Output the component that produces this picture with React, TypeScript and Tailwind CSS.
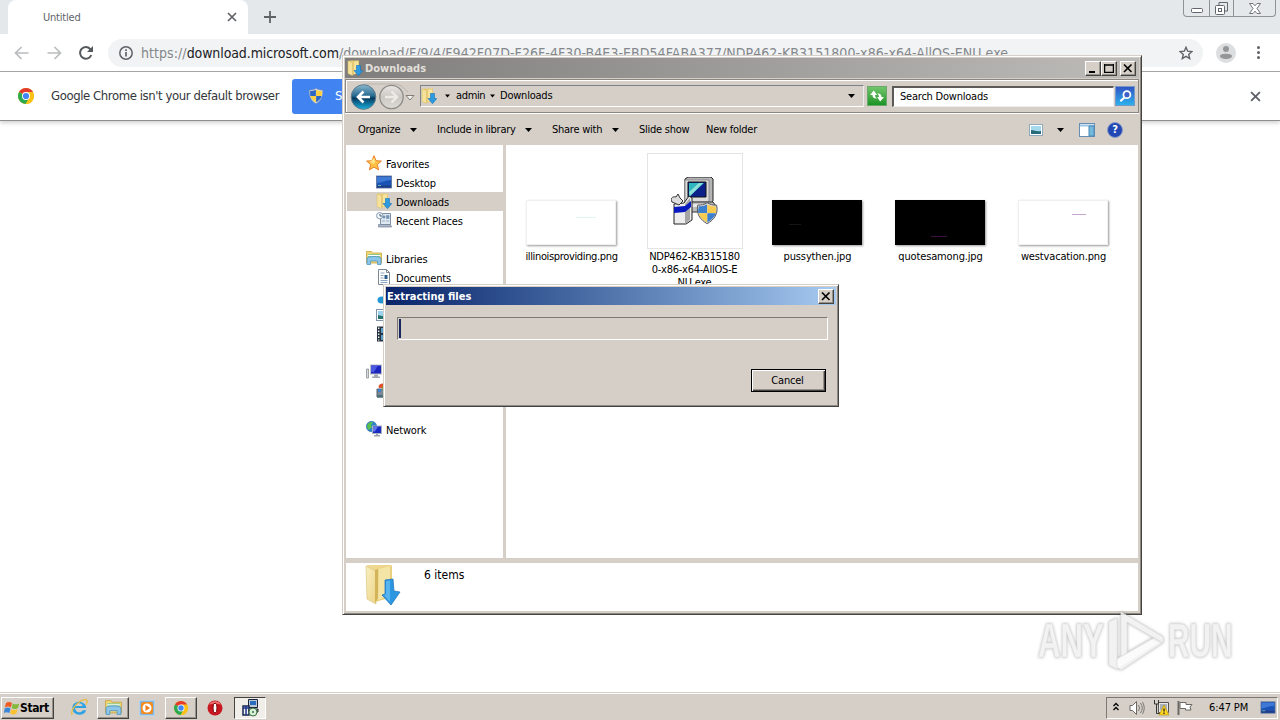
import React from "react";

type P = { className?: string };

const Svg = ({ className = "", box = "0 0 16 16", children }: { className?: string; box?: string; children: React.ReactNode }) => (
  <svg viewBox={box} className={`shrink-0 ${className}`} fill="none">{children}</svg>
);

const Caret = ({ className = "w-[7px]" }: P) => (
  <Svg className={`h-1 ${className}`} box="0 0 7 4"><path d="M0 0h7L3.5 4z" fill="#000" /></Svg>
);

const CloseX = ({ className = "" }: P) => (
  <Svg className={className} box="0 0 10 10"><path d="M1 1l8 8M9 1L1 9" stroke="#5f6368" strokeWidth="1.7" /></Svg>
);

const ChromeLogo = ({ className = "" }: P) => (
  <Svg className={className}>
    <circle cx="8" cy="8" r="8" fill="#fbc116" />
    <path d="M8 8L1.1 4A8 8 0 0 1 14.9 4z" fill="#e33b2e" />
    <path d="M8 8L1.1 4A8 8 0 0 0 7.6 16L11.3 9.8z" fill="#2da94f" />
    <path d="M8 4h6.9A8 8 0 0 1 7.6 16l3.9-6z" fill="#fbc116" />
    <circle cx="8" cy="8" r="4" fill="#fff" /><circle cx="8" cy="8" r="3.1" fill="#4285f4" />
  </Svg>
);

const Shield = ({ className = "" }: P) => (
  <Svg className={className}>
    <path d="M8 0.5c2 1.3 4.3 1.8 6.7 1.7.2 6-1.700 10.500-6.700 13.300C3 12.700 1.100 8.200 1.300 2.200 3.700 2.300 6 1.800 8 .5z" fill="#e8eaf0" stroke="#8a95a5" strokeWidth=".6" />
    <path d="M7.900 1.700V7.900H2.300c-.2-1.600-.2-3-.2-4.800C4.200 3.100 6.200 2.600 7.900 1.700z" fill="#2b66c4" />
    <path d="M8.100 1.700V7.900h5.600c.2-1.600.2-3 .2-4.800-2.100 0-4.100-.5-5.800-1.400z" fill="#fbd043" />
    <path d="M7.900 8.100v6.500C5 12.900 3 10.600 2.400 8.100z" fill="#fbd043" />
    <path d="M8.100 8.100v6.500c2.900-1.700 4.900-4 5.500-6.500z" fill="#2b66c4" />
  </Svg>
);

const DownloadsFolder = ({ className = "" }: P) => (
  <Svg className={className} box="0 0 36 42">
    <defs>
      <linearGradient id="fold" x2="1" y2="1"><stop stopColor="#f0dc98" /><stop offset="1" stopColor="#e5c868" /></linearGradient>
      <linearGradient id="flap" x2="1" y2="1"><stop stopColor="#f9efc0" /><stop offset="1" stopColor="#edd588" /></linearGradient>
    </defs>
    <path d="M2 1h24l1 1v26l-3 6-14 4z" fill="url(#fold)" />
    <path d="M14 5l11-3v30l-12 4z" fill="#f4e4a6" />
    <path d="M1 2l10 5v33L2 35z" fill="url(#flap)" stroke="#dcc682" strokeWidth=".7" />
    <path d="M10 6l3-1v29l-3 5z" fill="#d3b458" />
    <path d="M20 16l8-1 1 12 6 1-9 13-9-10 3-1z" fill="#2d96e0" stroke="#1670bd" strokeWidth=".7" />
    <path d="M21 17l4-.5V38l-6-7 2-1z" fill="#58b4ee" />
  </Svg>
);

const SmallFolder = ({ className = "" }: P) => (
  <Svg className={className}>
    <path d="M1 1l3-.5h8V13l-7 2z" fill="#e8cb74" />
    <path d="M1 1l4.500 1.500v13L1 13.500z" fill="#f6e29a" stroke="#d9bf6c" strokeWidth=".6" />
    <path d="M7 2l4-1v11l-4 2z" fill="#f5e4a0" />
    <path d="M9.500 5.500h4v5h2.300L11.500 15.700 7 10.500h2.500z" fill="#2d9be2" stroke="#1670b5" strokeWidth=".6" />
  </Svg>
);

const Monitor = ({ className = "" }: P) => (
  <Svg className={className}>
    <rect x=".5" y="2" width="15" height="12" fill="#1b52b5" stroke="#5a6f95" strokeWidth=".8" />
    <path d="M1 3h14v3C9 6 6 9 1 9z" fill="#3e79d6" /><path d="M1 11.500h14v2H1z" fill="#203d83" />
    <path d="M2 11.500h3" stroke="#6db8b0" />
  </Svg>
);

const Star = ({ className = "" }: P) => (
  <Svg className={className}>
    <path d="M8 .7l2.100 5 5.300.4-4.100 3.500 1.300 5.300L8 12.100l-4.600 2.800 1.300-5.300L.6 6.100l5.300-.4z" fill="#ffc240" stroke="#e8802b" strokeWidth="1" />
    <path d="M8 3l1.300 3.500L8 9 4 7z" fill="#ffe48c" />
  </Svg>
);

const Recent = ({ className = "" }: P) => (
  <Svg className={className}>
    <path d="M4.500 1.500h10v11h-10z" fill="#dfe9f3" stroke="#7d8ea3" />
    <path d="M7 4h2v2H7zM10.500 3.500h2.500v3h-2.500zM6 9h3M10 9h3" fill="#7297bd" stroke="#7b93ad" strokeWidth=".7" />
    <path d="M2.500 12.500h12l1 2.500h-13z" fill="#aab6c5" stroke="#738298" strokeWidth=".7" />
    <circle cx="3.700" cy="3.700" r="3.200" fill="#edf4fa" stroke="#8c9cb0" /><path d="M4 2v2h2" stroke="#52657f" />
  </Svg>
);

const Libraries = ({ className = "" }: P) => (
  <Svg className={className}>
    <path d="M.5 1.500h5l1 1.500h9v10H.5z" fill="#f2d777" stroke="#c6a43c" strokeWidth=".8" />
    <path d="M2 4h12v3H2z" fill="#8bc98b" /><path d="M2 5.500h12" stroke="#fff" />
    <path d="M1 8c2-2 12-2 14 0v6.500h-3.500V11h-7v3.500H1z" fill="#8cc6e8" stroke="#4d96c4" strokeWidth=".8" />
  </Svg>
);

const Doc = ({ className = "" }: P) => (
  <Svg className={className}>
    <path d="M2.500.5h8l3 3v12h-11z" fill="#fff" stroke="#7c8795" /><path d="M10.500.5v3h3" stroke="#7c8795" />
    <path d="M4.500 4h4M4.500 6.500h3M4.500 9h3M4.500 11.500h7M4.500 13.500h7" stroke="#8aa4c4" /><path d="M8.500 6h3v4h-3z" fill="#285d8d" />
  </Svg>
);

const Music = ({ className = "" }: P) => (
  <Svg className={className}><ellipse cx="6" cy="12" rx="4.500" ry="3.500" fill="#2296d4" /><path d="M9 12V2l5 2" stroke="#2296d4" strokeWidth="2" /></Svg>
);

const Pictures = ({ className = "" }: P) => (
  <Svg className={className}>
    <rect x=".5" y="2.500" width="15" height="11" fill="#fff" stroke="#7f93a8" />
    <path d="M2 4h12v8H2z" fill="#9dd3ee" /><path d="M2 8l4 1 5-1 3 2v2H2z" fill="#25716b" />
  </Svg>
);

const Film = ({ className = "" }: P) => (
  <Svg className={className}>
    <rect x="1" y=".5" width="14" height="15" fill="#26323f" /><path d="M5 2h7v5H5zM5 9h7v5H5z" fill="#5d9ec9" />
    <path d="M2.700 1.500v13" stroke="#fff" strokeWidth="1.300" strokeDasharray="1.500 1.500" />
  </Svg>
);

const Computer = ({ className = "" }: P) => (
  <Svg className={className}>
    <path d="M.5 5h2v9h-2z" fill="#d9dce0" stroke="#8b9097" strokeWidth=".8" />
    <rect x="4.500" y="1" width="11" height="9" fill="#1b24bd" stroke="#b8bdc6" />
    <path d="M5 1.500h7L8 8H5z" fill="#4a58e2" /><path d="M8 10.500h4v2h2V14H6v-1.500h2z" fill="#a3a9b2" />
  </Svg>
);

const Disk = ({ className = "" }: P) => (
  <Svg className={className}>
    <path d="M1 6h14v8H1z" fill="#7b8893" stroke="#545e68" /><path d="M1 12h14v2.500H1z" fill="#4f6f78" />
    <path d="M2.500 3C4 0 7 0 8 1v4H3z" fill="#e0522b" />
    <path d="M6.500 3l4 1v3h-4z" fill="#79b83c" /><path d="M2 6h3v3H2z" fill="#3c82cf" />
  </Svg>
);

const Network = ({ className = "" }: P) => (
  <Svg className={className}>
    <circle cx="5.500" cy="5.500" r="5.200" fill="#2b83cf" stroke="#1c5f9b" strokeWidth=".5" />
    <path d="M1.500 3.500C3 .8 6 .5 7 1.500L5 4l1 2-3 3C1 8 .7 5 1.500 3.500z" fill="#59c04d" />
    <rect x="6.500" y="5" width="9" height="7.500" fill="#1a2bc4" stroke="#a7b0bf" /><path d="M7 5.500h5l-3 5H7z" fill="#5e76e8" />
    <path d="M10 13h2v1h2v1.500H8V14h2z" fill="#9aa2ad" />
  </Svg>
);

const Installer = ({ className = "" }: P) => (
  <Svg className={className} box="0 0 48 48">
    <path d="M14 2l3-2h23l2 2v22l-3 3H14z" fill="#b5b5b5" stroke="#222" strokeWidth="1" />
    <path d="M14 3h24v22H14z" fill="#dcdcdc" stroke="#777" strokeWidth=".7" />
    <path d="M17 5h18v15H17z" fill="#0b2088" stroke="#111" /><path d="M18 6h15L19 19h-1z" fill="#2fb7c0" /><path d="M18 15l10-9h4L19 19z" fill="#8ee0d8" />
    <path d="M17 25h25l3 4v6H15v-8z" fill="#bdbdbd" stroke="#333" /><path d="M18 27h22l3 3H17z" fill="#e8e8e8" />
    <path d="M3 27l10-1 5-7 3 2v22l-6 4H3z" fill="#ededed" stroke="#222" />
    <path d="M14 27v20l5-4V21z" fill="#a5a5a5" /><path d="M3 30l11-1 6-5v6l-6 5-11 1z" fill="#0719bf" />
    <path d="M1 25c-2-3 0-6 4-5l2-3 2 4 3 3-4 4z" fill="#ddd" stroke="#333" />
    <g transform="translate(25 25) scale(1.4)">
      <path d="M8 0.500c2 1.300 4.300 1.800 6.700 1.700 1.500 6-1.700 10.500-6.700 13.300C3 12.700-.2 8.200 1.300 2.200 3.700 2.300 6 1.800 8 .5z" fill="#ddd" stroke="#555" strokeWidth=".7" />
      <path d="M7.900 1.700V7.900H1.600c-.2-1.600 0-3 .5-4.800 2.100 0 4.100-.5 5.800-1.400zM8.100 8.100v6.500c2.900-1.700 5.400-4 6.100-6.500z" fill="#3c7fce" />
      <path d="M8.100 1.700V7.900h6.200c.2-1.600 0-3-.4-4.800-2.100 0-4.100-.5-5.800-1.400zM7.900 8.100v6.500C5 12.900 2.400 10.600 1.700 8.100z" fill="#f9cc50" />
    </g>
  </Svg>
);

function Browser() {
  return (
    <div className="flex h-[692px] flex-col bg-white">
      <div className="flex h-[34px] bg-[#e5e8eb]">
        <div className="w-2 rounded-br-lg bg-[#e5e8eb]" />
        <div className="flex w-60 items-center rounded-t-lg bg-white pr-[11px] pl-[35px] text-[#606469]">
          <span className="flex-1 pt-px text-[11px] leading-4 tracking-[-0.2px]">Untitled</span>
          <CloseX className="size-[10px]" />
        </div>
        <Svg className="mt-[11px] ml-[16px] size-3" box="0 0 12 12"><path d="M6 0v12M0 6h12" stroke="#5f6368" strokeWidth="1.800" /></Svg>
        <div className="mr-1 ml-auto flex h-[17px] w-[93px] rounded-b-[4px] border border-t-0 border-[#8d9299] text-[#62676e]">
          <div className="flex w-[25px] items-center justify-center"><Svg className="mt-[5px] h-[5px] w-3" box="0 0 12 5"><rect x=".5" y=".5" width="11" height="4" rx="1" fill="#fff" stroke="#62676e" /></Svg></div>
          <div className="flex w-[25px] items-center justify-center border-x border-[#8d9299]">
            <Svg className="size-[13px]" box="0 0 13 13"><path d="M4 3V.5h8.500V9H10" stroke="#62676e" /><rect x=".5" y="3.500" width="9" height="9" rx="1" fill="#fff" stroke="#62676e" /><rect x="3.500" y="6.500" width="3" height="3" stroke="#62676e" /></Svg>
          </div>
          <div className="flex flex-1 items-center justify-center">
            <Svg className="h-[11px] w-3" box="0 0 12 11"><path d="M.5.500H4l2 2.300L8 .500h3.500L8 5.500l3.500 5H8L6 8.200 4 10.500H.5L4 5.500z" fill="#fff" stroke="#62676e" strokeWidth=".9" /></Svg>
          </div>
        </div>
      </div>
      <div className="flex h-[38px] items-center border-b border-[#a9a9a9] bg-white pl-[14px]">
        <Svg className="mr-[18px] h-[14px] w-[15px]" box="0 0 15 14"><path d="M14.500 7H1.500M7.500 1l-6 6 6 6" stroke="#babcbe" strokeWidth="1.700" /></Svg>
        <Svg className="mr-[17px] h-[14px] w-[15px]" box="0 0 15 14"><path d="M.5 7h13M7.500 1l6 6-6 6" stroke="#babcbe" strokeWidth="1.700" /></Svg>
        <Svg className="mr-[15px] size-[14px]" box="0 0 14 14"><path d="M12.300 9A5.800 5.800 0 1 1 11.200 3L12.500 4.500" stroke="#55595e" strokeWidth="2" /><path d="M14 0v6H8z" fill="#55595e" /></Svg>
        <div className="flex h-7 w-[1095px] items-center rounded-full bg-[#f1f3f4] pr-[10px] pl-[11px]">
          <Svg className="mr-2 size-[14px]" box="0 0 14 14"><circle cx="7" cy="7" r="6.200" stroke="#5f6368" strokeWidth="1.500" /><path d="M7 6v4.500M7 3.300V5" stroke="#5f6368" strokeWidth="1.700" /></Svg>
          <span className="whitespace-nowrap text-[14px] leading-5 tracking-[0.06px] text-[#84888c]">https://<span className="tracking-[-0.1px] text-[#202124]">download.microsoft.com</span>/download/F/9/4/F942F07D-F26F-4F30-B4E3-EBD54FABA377/NDP462-KB3151800-x86-x64-AllOS-ENU.exe</span>
          <Svg className="ml-auto size-[14px]" box="0 0 14 14"><path d="M7 1.300l1.700 3.900 4.200.4-3.200 2.800 1 4.200L7 10.400l-3.700 2.200 1-4.200L1.100 5.600l4.200-.4z" stroke="#5f6368" strokeWidth="1.400" /></Svg>
        </div>
        <Svg className="ml-[13px] size-5" box="0 0 20 20"><circle cx="10" cy="10" r="10" fill="#dddee0" /><circle cx="10" cy="6" r="3" fill="#949698" /><path d="M4 13c0-3 12-3 12 0 0 4-12 4-12 0z" fill="#949698" /></Svg>
        <Svg className="ml-[21px] h-[13px] w-[3px]" box="0 0 3 13"><g fill="#5f6368"><circle cx="1.500" cy="1.500" r="1.500" /><circle cx="1.500" cy="6.500" r="1.500" /><circle cx="1.500" cy="11.500" r="1.500" /></g></Svg>
      </div>
      <div className="flex h-[49px] items-center border-b border-[#8e8e8e] pr-[19px] pl-[18px] shadow-[0_2px_4px_rgba(0,0,0,0.18)]">
        <ChromeLogo className="mr-[17px] size-4" />
        <span className="w-[241px] whitespace-nowrap text-[13px] leading-5 tracking-[-0.41px] text-[#33363a]">Google Chrome isn't your default browser</span>
        <div className="flex h-[35px] w-[120px] items-center rounded-[3px] bg-[#4183f0] pl-4 text-[13px] text-white"><Shield className="mr-[11px] size-4" />S</div>
        <CloseX className="ml-auto size-[11px]" />
      </div>
    </div>
  );
}

const raised = "border border-t-white border-l-white border-r-[#45433f] border-b-[#45433f] bg-[#d5cfc8] shadow-[inset_-1px_-1px_0_#96918b]";

function Caption({ kind }: { kind: "min" | "max" | "close" }) {
  return (
    <div className={`flex h-[15px] w-4 items-center justify-center ${raised}`}>
      <Svg className="h-[9px] w-[10px]" box="0 0 10 9">
        {kind === "min" && <path d="M1 8h6" stroke="#000" strokeWidth="2" />}
        {kind === "max" && <path d="M.5 1h9M.5 0v8.500h9V0" stroke="#000" strokeWidth="1.500" />}
        {kind === "close" && <path d="M1 .5l7.500 7.500M8.500.500L1 8" stroke="#000" strokeWidth="1.600" />}
      </Svg>
    </div>
  );
}

type Row = { icon?: (p: P) => React.ReactElement; label?: string; child?: boolean; active?: boolean };
const rows: Row[] = [
  { icon: Star, label: "Favorites" },
  { icon: Monitor, label: "Desktop", child: true },
  { icon: SmallFolder, label: "Downloads", child: true, active: true },
  { icon: Recent, label: "Recent Places", child: true },
  {},
  { icon: Libraries, label: "Libraries" },
  { icon: Doc, label: "Documents", child: true },
  { icon: Music, child: true },
  { icon: Pictures, child: true },
  { icon: Film, child: true },
  {},
  { icon: Computer },
  { icon: Disk, child: true },
  {},
  { icon: Network, label: "Network" },
];

function Thumb({ name, dark, tracking = "tracking-[-0.15px]", children }: { name: string; dark?: boolean; tracking?: string; children?: React.ReactNode }) {
  return (
    <div className="flex w-[123px] shrink-0 flex-col items-center pt-[47px]">
      <div className={`mr-px h-[45px] w-[90px] shadow-[1px_1px_2px_rgba(0,0,0,0.4)] ${dark ? "bg-black" : "border border-[#f0f0f0] bg-white"}`}>{children}</div>
      <span className={`mt-[5px] leading-[13px] ${tracking}`}>{name}</span>
    </div>
  );
}

function Explorer() {
  return (
    <div className="absolute top-[55px] left-[342px] flex h-[560px] w-[800px] flex-col border border-t-[#d5cfc8] border-r-[#45433f] border-b-[#45433f] border-l-[#d5cfc8] bg-[#d5cfc8] p-[2px] shadow-[inset_1px_1px_0_#fff,inset_-1px_-1px_0_#8d8984]">
      <div className="flex h-5 shrink-0 items-center bg-linear-to-r from-[#7f7e7c] to-[#bebcb9] pr-[3px] pl-[2px]">
        <SmallFolder className="mr-[2px] size-4" />
        <span className="flex-1 pt-px text-[11px] font-bold tracking-[0px] text-[#e2dfda]">Downloads</span>
        <Caption kind="min" /><Caption kind="max" /><div className="w-[3px]" /><Caption kind="close" />
      </div>
      <div className="mt-px flex h-[34px] shrink-0 items-center border border-[#8a8782] pl-1 shadow-[inset_1px_1px_0_#fff,0_1px_0_#fff]">
        <Svg className="h-[30px] w-[66px]" box="0 0 66 30">
          <defs>
            <linearGradient id="back" x2="0" y2="1"><stop stopColor="#8ab9ce" /><stop offset=".45" stopColor="#286a91" /><stop offset=".55" stopColor="#07395f" /><stop offset="1" stopColor="#19b2df" /></linearGradient>
            <linearGradient id="fwd" x2="0" y2="1"><stop stopColor="#e9e8e5" /><stop offset=".5" stopColor="#cbc8c3" /><stop offset="1" stopColor="#dedcd7" /></linearGradient>
          </defs>
          <path d="M14 3h30c8 0 10 5 14 8" stroke="#b9b5b0" />
          <circle cx="13.500" cy="16" r="12.300" fill="url(#back)" stroke="#61798a" />
          <path d="M20 16H8M13.500 10.500L8 16l5.500 5.500" stroke="#fff" strokeWidth="2.600" />
          <circle cx="41.500" cy="16" r="11.700" fill="url(#fwd)" stroke="#8e8c88" strokeWidth="1.300" />
          <path d="M35 16h12M41.500 10.500L47 16l-5.500 5.500" stroke="#edebe7" strokeWidth="2.400" />
          <path d="M56 14.500h8l-4 4.500z" fill="#f3f2ef" stroke="#77736d" strokeWidth=".9" />
        </Svg>
        <div className="ml-[4px] flex h-[22px] w-[444px] items-center border border-t-[#7e8288] border-l-[#7e8288] border-r-[#eee] border-b-white pr-[8px] pl-0">
          <SmallFolder className="mr-[8px] size-4" />
          <Caret className="mr-[6px] w-[5px]" />
          <span className="w-[33px] tracking-[-0.35px]">admin</span>
          <Caret className="mr-[5px] ml-px w-[5px]" />
          <span className="tracking-[-0.22px]">Downloads</span>
          <Caret className="ml-auto w-[7px]" />
        </div>
        <div className="ml-[3px] flex size-5 items-center justify-center border border-[#6da76c] bg-linear-to-b from-[#6fc56a] to-[#159425]">
          <Svg className="size-4">
            <path d="M1 7l3.800-4.500L8 7H6c0 2 1 3 2 3.500-3 .5-4.500-1-4.500-3.500z" fill="#fff" />
            <path d="M15 9l-3.800 4.500L8 9h2c0-2-1-3-2-3.500 3-.5 4.500 1 4.500 3.500z" fill="#fff" />
          </Svg>
        </div>
        <div className="ml-[5px] flex h-[21px] w-[222px] items-center border border-t-2 border-l-2 border-t-[#5c5a56] border-r-[#eee] border-b-[#eee] border-l-[#5c5a56] bg-white pl-[6px]">
          <span className="tracking-[-0.22px]">Search Downloads</span>
        </div>
        <div className="ml-px flex h-5 w-[20px] items-center justify-center border border-[#7799c9] bg-linear-to-b from-[#3054c4] to-[#2bb1ec]">
          <Svg className="size-[15px]"><circle cx="9.500" cy="6" r="3.700" fill="#3c5fc8" stroke="#fff" strokeWidth="1.900" /><path d="M6.800 9L2.500 13" stroke="#fff" strokeWidth="2.300" /></Svg>
        </div>
      </div>
      <div className="flex h-[32px] shrink-0 items-center pt-[1px] pl-[13px] tracking-[-0.25px]">
        <span className="w-[52px]">Organize</span><Caret className="mr-5 w-[7px]" />
        <span className="w-[88px] whitespace-nowrap">Include in library</span><Caret className="mr-5 w-[7px]" />
        <span className="w-[60px] whitespace-nowrap">Share with</span><Caret className="mr-5 w-[7px]" />
        <span className="w-[67px] whitespace-nowrap">Slide show</span>
        <span className="whitespace-nowrap">New folder</span>
        <Svg className="mr-[14px] ml-auto h-[12px] w-[14px]" box="0 0 14 12"><rect x=".5" y=".5" width="13" height="11" fill="#fff" stroke="#91a9bc" /><path d="M2 2h10v8H2z" fill="#a5d9ee" /><path d="M2 6c4 0 5 2 10 1v3H2z" fill="#286a79" /></Svg>
        <Caret className="mr-[15px] w-[7px]" />
        <Svg className="mr-[12px] h-[14px] w-4" box="0 0 16 14"><rect x=".5" y=".5" width="15" height="13" fill="#fff" stroke="#668db2" /><path d="M1 2.500h14" stroke="#9dc4e5" strokeWidth="2" /><path d="M10 3h5v10h-5z" fill="#72b9dc" stroke="#4a87b4" /></Svg>
        <div className="mr-4 flex size-4 items-center justify-center rounded-full border border-[#8a9cc8] bg-[#2348b4] text-[11px] font-bold tracking-normal text-white">?</div>
      </div>
      <div className="mr-px ml-px flex min-h-0 flex-1 flex-col bg-white">
        <div className="flex h-[413px]">
          <div className="w-[157px] shrink-0 bg-white pt-[9px]">
            {rows.map((r, i) => {
              const Icon = r.icon;
              return (
                <div key={i} className={`ml-px flex h-[19px] items-center ${r.child ? "pl-[29px]" : "pl-[19px]"} ${r.active ? "bg-[#d5cfc8]" : ""}`}>
                  {Icon && <Icon className="mb-px size-4" />}
                  {r.label && <span className="ml-1 pt-[2px] tracking-[-0.15px]">{r.label}</span>}
                </div>
              );
            })}
          </div>
          <div className="w-[3px] shrink-0 bg-[#d5cfc8]" />
          <div className="flex min-w-0 flex-1 pt-2 pl-[4px]">
            <Thumb name="illinoisproviding.png" tracking="tracking-[-0.35px]"><div className="mt-[16px] ml-[49px] h-px w-5 bg-[#e0f6f3]" /></Thumb>
            <div className="flex w-[123px] shrink-0 flex-col items-center">
              <div className="flex h-24 w-24 items-center justify-center border border-[#e4e4e4]"><Installer className="size-12" /></div>
              <span className="mt-px text-center leading-[13px] tracking-[-0.25px]">NDP462-KB315180<br />0-x86-x64-AllOS-E<br />NU.exe</span>
            </div>
            <Thumb name="pussythen.jpg" dark><div className="h-[24px]" /><div className="ml-[17px] h-px w-3 bg-[#151515]" /></Thumb>
            <Thumb name="quotesamong.jpg" dark><div className="h-[36px]" /><div className="ml-[36px] h-px w-4 bg-[#3d1040]" /></Thumb>
            <Thumb name="westvacation.png"><div className="mt-[13px] ml-[53px] h-px w-[14px] bg-[#c5a5cf]" /></Thumb>
          </div>
        </div>
        <div className="h-[5px] bg-[#d5cfc8]" />
        <div className="flex flex-1 bg-white pl-[19px]">
          <DownloadsFolder className="mt-px h-[42px] w-9" />
          <span className="mt-[4px] ml-[23px] text-[12px] leading-4">6 items</span>
        </div>
      </div>
      <div className="h-px shrink-0" />
    </div>
  );
}

function Dialog() {
  return (
    <div className="absolute top-[284px] left-[383px] flex h-[123px] w-[456px] flex-col border border-t-[#d5cfc8] border-r-[#45433f] border-b-[#45433f] border-l-[#d5cfc8] bg-[#d5cfc8] p-[2px] shadow-[inset_1px_1px_0_#fff,inset_-1px_-1px_0_#8d8984]">
      <div className="flex h-[18px] items-center bg-linear-to-r from-[#0a246a] to-[#a6caf0] pr-[2px] pl-px">
        <span className="flex-1 pt-px text-[11px] font-bold tracking-[0px] text-white">Extracting files</span>
        <Caption kind="close" />
      </div>
      <div className="mt-3 ml-[11px] h-[23px] w-[431px] border border-t-[#7c7975] border-r-white border-b-white border-l-[#7c7975] p-px">
        <div className="h-[19px] w-[2px] bg-[#15275e]" />
      </div>
      <button className="mt-[29px] mr-[10px] ml-auto h-[23px] w-[75px] border border-black bg-[#d5cfc8] p-0 pr-[2px] tracking-[-0.2px] shadow-[inset_1px_1px_0_#fff,inset_-1px_-1px_0_#45433f,inset_-2px_-2px_0_#96918b]">Cancel</button>
    </div>
  );
}

function Watermark() {
  return (
    <div className="absolute top-[609px] left-[1038px] flex h-16 w-[200px] items-center text-[48px] leading-none font-bold text-white/80 [-webkit-text-stroke:1px_rgba(225,225,225,0.7)] [font-family:'Liberation_Sans_Narrow','Liberation_Sans',sans-serif] [filter:drop-shadow(0_0_1.5px_rgba(90,90,90,0.5))]">
      <span className="block w-[68px] origin-left scale-x-[0.65]">ANY</span>
      <Svg className="mr-[4px] h-[62px] w-[58px]" box="0 0 58 62">
        <g fill="#fff" fillOpacity=".8" stroke="#dedede" strokeOpacity=".8" strokeWidth="1">
          <path d="M15 2l42 25v6L21 12v32l-6 3z" /><path d="M3 12l8-4v41l34-20 7 4L11 59l-8-4z" /><path d="M11 49l37-21 8 5-41 27-4-3z" />
        </g>
      </Svg>
      <span className="block w-[64px] origin-left scale-x-[0.62]">RUN</span>
    </div>
  );
}

function TaskButton({ pressed, children }: { pressed?: boolean; children: React.ReactNode }) {
  return <div className={`flex h-[22px] w-8 items-center justify-center ${pressed ? "border border-t-[#45433f] border-r-white border-b-white border-l-[#45433f] bg-[#f1eeea]" : raised}`}>{children}</div>;
}

function Taskbar() {
  return (
    <div className="flex h-7 items-center border-t border-[#d5cfc8] bg-[#d5cfc8] pt-[2px] shadow-[inset_0_1px_0_#fff]">
      <div className={`ml-px flex h-[22px] w-[53px] items-center pl-[2px] ${raised}`}>
        <Svg className="size-4"><path d="M2 3c2-1.500 4-1.500 6 0L6.800 7.500c-2-1.200-4-1.200-6 0z" fill="#ee5a24" /><path d="M8.800 3.400c2 1.200 4 1.200 6.500 0L14 8c-2.300 1.200-4.300 1.200-6.300 0z" fill="#83b93a" /><path d="M.6 8.500c2-1.200 4-1.200 6 0L5.400 13c-2-1.200-4-1-5.400 0z" fill="#3a86d8" /><path d="M7.400 9c2 1.200 4 1.200 6.300 0l-1.300 4.500c-2 1.200-4.200 1.200-6.300 0z" fill="#fac233" /></Svg>
        <span className="text-[12px] font-bold tracking-[-0.4px]">Start</span>
      </div>
      <Svg className="mr-[9px] ml-[17px] size-[17px]">
        <path d="M14.500 8.500H3.800c.3 4.500 5.500 5.300 7.200 2h3.300c-1.700 6-13 6-13-2s12.200-8 13.200 0zM4 6.500h7c-.7-3.200-6-3.200-7 0z" fill="#31a2e1" />
        <path d="M1 15C-1 10 9-1 14.500.800c1.500.8.500 3-.5 4.700" stroke="#e8bd40" strokeWidth="1.200" />
      </Svg>
      <TaskButton><Libraries className="size-[17px]" /></TaskButton>
      <Svg className="mr-[10px] ml-[10px] size-4"><rect x=".5" y=".5" width="15" height="15" fill="#81b6df" stroke="#b8d3e8" /><rect x="2" y="2" width="12" height="12" rx="2.500" fill="#f58b1f" /><circle cx="8" cy="8" r="4.500" fill="#fff" /><path d="M6.500 5v6L11 8z" fill="#f0791a" /></Svg>
      <TaskButton><ChromeLogo className="size-[14px]" /></TaskButton>
      <Svg className="mr-[11px] ml-[10px] size-4"><circle cx="8" cy="8" r="7.500" fill="#c91720" /><path d="M2 5c2-5 10-5 12 0-3-2-9-2-12 0z" fill="#ec7474" /><ellipse cx="8" cy="8" rx="2" ry="5" fill="#fff" stroke="#7f080d" /></Svg>
      <TaskButton pressed>
        <Svg className="size-[18px]" box="0 0 18 18"><path d="M7.500.500h9v8h-9z" fill="#bfc8d1" stroke="#18253f" /><path d="M9 2h6v4H9z" fill="#2b6cc1" /><path d="M2 7h6v9H2z" fill="#f3f3f3" stroke="#14264d" strokeWidth="1.500" /><path d="M2 9h6M5 7v9" stroke="#1d328c" strokeWidth="1.500" /><path d="M8 10h9v3H8z" fill="#aaa" stroke="#222" /><circle cx="12" cy="13" r="4" fill="#d8efd8" stroke="#397041" /><circle cx="12" cy="13" r="1" fill="#397041" /></Svg>
      </TaskButton>
      <div className="mr-[2px] ml-auto flex h-[22px] w-[172px] items-center border border-t-[#7c7975] border-r-white border-b-white border-l-[#7c7975] pl-[6px]">
        <Svg className="mr-[10px] mb-[2px] h-[9px] w-[6px]" box="0 0 6 9"><path d="M.5 4L3 1.500 5.500 4M.5 8L3 5.500 5.500 8" stroke="#000" strokeWidth="1.300" /></Svg>
        <Svg className="mr-2 size-4"><path d="M1 5.500h2.500L7.500 1.500v13l-4-4H1z" fill="#fff" stroke="#6b6966" /><path d="M9.500 5q2 3 0 6M11.500 3q3.500 5 0 10M13.500 2q3.500 6 0 12" stroke="#7c7a77" /></Svg>
        <Svg className="mr-2 size-4"><path d="M5.500 2.500h10v10h-10z" fill="#e8e8e6" stroke="#555" /><path d="M7 4h7v6H7z" fill="#aab1b8" /><path d="M1.500 0v4h4V0M3.500 4v9.500H7" stroke="#333" /><path d="M11 5l5 10H6z" fill="#ffd51f" stroke="#ad8c06" strokeWidth=".6" /><path d="M11 8.500v3M11 12.500V14" stroke="#222" strokeWidth="1.300" /></Svg>
        <Svg className="size-4"><path d="M1.500 1v14" stroke="#6b6966" strokeWidth="2" /><path d="M3 2.500h6v2h6L13 7l1 3H8.500V8.500H3z" fill="#fff" stroke="#6b6966" /></Svg>
        <span className="ml-4 w-[51px] whitespace-nowrap tracking-[-0.1px]">6:47 PM</span>
        <Monitor className="h-[15px] w-4" />
      </div>
    </div>
  );
}

export default function App() {
  return (
    <div className="relative h-[720px] w-[1280px] overflow-hidden bg-white text-[11px] leading-4 text-black [font-family:'DejaVu_Sans_Condensed','DejaVu_Sans',sans-serif]">
      <Browser />
      <Taskbar />
      <Explorer />
      <Dialog />
      <Watermark />
    </div>
  );
}
